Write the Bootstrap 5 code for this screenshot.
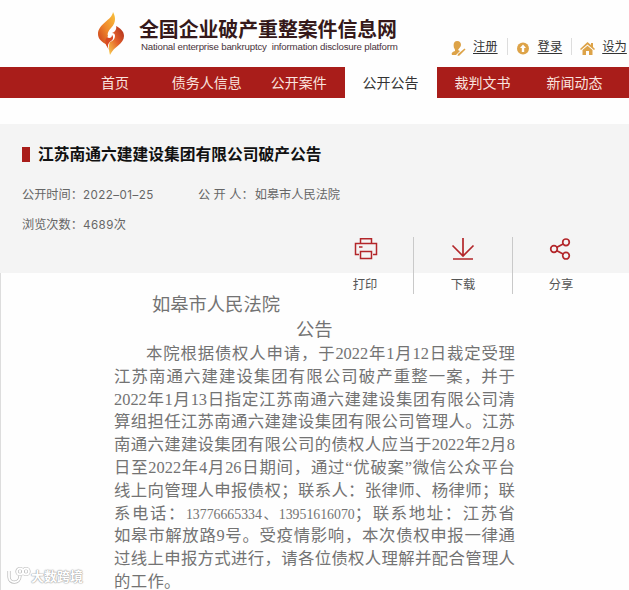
<!DOCTYPE html>
<html lang="zh-CN">
<head>
    <meta charset="UTF-8">
    <meta name="viewport" content="width=device-width, initial-scale=1.0">
    <title>全国企业破产重整案件信息网</title>
    <link href="https://cdn.jsdelivr.net/npm/bootstrap@5.3.0/dist/css/bootstrap.min.css" rel="stylesheet">
    <style>
        body {
            font-family: "Noto Sans CJK SC", sans-serif;
            width: 629px;
            height: 590px;
            overflow: hidden;
            background: #fefefe;
        }
        .site-header { height: 67px; padding-left: 96px; overflow: hidden; }
        .site-logo { width: 30px; height: 45px; margin-top: 11px; }
        .site-name { width: 260px; margin: 17px 0 0 13px; color: #35191a; }
        .site-name h1 { font-size: 19.9px; line-height: 24px; letter-spacing: -.05px; }
        .site-name p {
            font: 9.7px/12px "Liberation Sans", sans-serif;
            letter-spacing: -.19px;
            color: #49333b;
            padding-left: 2px;
            white-space: pre;
        }
        .user-links { margin: 36px 0 0 52px; font-size: 12.3px; line-height: 20px; }
        .user-links a { color: #333; text-underline-offset: 2px; }
        .user-links svg { width: 15px; height: 15px; margin: 5px 7px 0 0; }
        .user-links .split { border-left: 1px solid #ddd; height: 17px; margin: 2px 8px 0 9px; }

        .main-nav { height: 31px; background: #a91d1a; padding-left: 69px; }
        .main-nav .nav-link {
            width: 91.9px;
            height: 31px;
            line-height: 31px;
            font-size: 14px;
            color: #f9e3df;
        }
        .main-nav .nav-link.active { background: #fefefe; color: #333; }

        .notice-head { height: 149px; margin-top: 26px; padding: 18px 0 0 22px; background: #f4f4f4; }
        .notice-head h2 { font-size: 15.75px; line-height: 24px; color: #111; }
        .title-bar { width: 8px; height: 15px; margin-right: 8px; background: #a91d1a; }
        .meta { font-size: 12.2px; line-height: 20px; color: #666; font-family: Inter, "Noto Sans CJK SC", sans-serif; }
        .meta .cell { width: 176px; }
        .meta .num { font-size: 11.6px; letter-spacing: .45px; }
        .meta-first { margin-top: 19px; }
        .meta-second { margin-top: 10px; }

        .notice-main { height: 317px; border-left: 1px solid #ddd; }
        .tools { margin: -36px 0 0 316px; height: 57px; }
        .tools .tool { width: 96px; font-size: 12.3px; color: #555; line-height: 18px; }
        .tools .tool-mid { width: 100px; border: solid #c9c9c9; border-width: 0 1px; }
        .tools svg { width: 26px; height: 24px; margin-bottom: 14px; }

        .notice-body {
            width: 401px;
            margin: -1px 0 0 113px;
            font-family: "Liberation Serif", "Noto Sans CJK SC", serif;
            font-size: 16.4px;
            line-height: 22.8px;
            color: #737373;
        }
        .notice-body .court { font-size: 18.3px; padding-left: 38px; line-height: 24px; }
        .notice-body .heading { font-size: 18.3px; padding-left: 182px; line-height: 26px; }
        .line { white-space: nowrap; text-align: justify; text-align-last: justify; height: 22.8px; }
        .line.indent { padding-left: 32px; }
        .line.last { text-align-last: left; letter-spacing: .3px; }
        .phone { font-size: 13.8px; }

        .site-stamp { position: absolute; left: 7px; top: 566px; color: #fff; }
        .site-stamp svg { width: 24px; height: 20px; }
        .site-stamp span {
            font-size: 13px;
            line-height: 20px;
            font-weight: 700;
            text-shadow: 0 0 1px #999, 0 0 1px #aaa, 0 0 2px #bbb;
        }
    </style>
</head>
<body>
    <header class="site-header d-flex align-items-start text-nowrap">
        <svg class="site-logo flex-shrink-0" viewBox="0 0 30 45">
            <defs>
                <linearGradient id="flameTop" x1="1" y1="0" x2="0" y2="1">
                    <stop offset="0" stop-color="#f8c33c"/>
                    <stop offset=".5" stop-color="#f08a2c"/>
                    <stop offset="1" stop-color="#c93a1c"/>
                </linearGradient>
                <linearGradient id="flameBottom" x1="1" y1="0" x2="0" y2="1">
                    <stop offset="0" stop-color="#a82a1a"/>
                    <stop offset=".5" stop-color="#e4602a"/>
                    <stop offset="1" stop-color="#f9cf50"/>
                </linearGradient>
            </defs>
            <path d="M17 1C16 9 2 13 2 23c0 5 4 8 9 11-1-4-1-7 1-9-1-2 0-5 3-8 3-3 4-6 4-9 0-3-1-5-2-7z" fill="url(#flameTop)"/>
            <path d="M20 15c4 2 8 5 8 10 0 8-10 10-14 19-1-5-2-9 0-13 3-1 5-3 5-6 0-2-1-3-3-3 3-1 5-4 4-7z" fill="url(#flameBottom)"/>
            <path d="M10 34c-1-3-1-6 1-8 2 2 5 1 5-2 2 2 1 5-1 6-3 2-4 5-2 9z" fill="#d94a22"/>
        </svg>
        <div class="site-name flex-shrink-0">
            <h1 class="fw-bold m-0">全国企业破产重整案件信息网</h1>
            <p class="m-0">National enterprise bankruptcy  information disclosure platform</p>
        </div>
        <div class="user-links d-flex">
            <svg viewBox="0 0 15 15" fill="#dda348"><path d="M6 0c3 0 4 2 4 4S8 7 7 9l2 1-4 4H1c-1-2 0-3 3-4 0-1 0-2-1-3-1-4 0-7 3-7z"/><path d="M13.5 7.5l1 1-6 6-2 .5.5-2z"/></svg>
            <a href="#">注册</a>
            <span class="split"></span>
            <svg viewBox="0 0 15 15"><circle cx="7" cy="7.5" r="6" fill="#dda348"/><path d="M7 3.500l3 3.500H8.200v4H5.800V7H4z" fill="#fff"/></svg>
            <a href="#">登录</a>
            <span class="split"></span>
            <svg viewBox="0 0 15 15" fill="#dda348"><path d="M7.500 1L11 4V2h2v4l2 2-1 1-6.500-5.500L1 9 0 8z"/><path d="M2.500 9l5-4.300 5 4.300v5H9v-4H6v4H2.500z"/></svg>
            <a href="#">设为</a>
        </div>
    </header>

    <nav class="main-nav nav flex-nowrap text-center overflow-hidden">
        <a class="nav-link p-0 flex-shrink-0" href="#">首页</a>
        <a class="nav-link p-0 flex-shrink-0" href="#">债务人信息</a>
        <a class="nav-link p-0 flex-shrink-0" href="#">公开案件</a>
        <a class="nav-link p-0 flex-shrink-0 active" href="#">公开公告</a>
        <a class="nav-link p-0 flex-shrink-0" href="#">裁判文书</a>
        <a class="nav-link p-0 flex-shrink-0" href="#">新闻动态</a>
    </nav>

    <section class="notice-head">
        <div class="d-flex align-items-center">
            <span class="title-bar"></span>
            <h2 class="fw-bold m-0">江苏南通六建建设集团有限公司破产公告</h2>
        </div>
        <div class="meta meta-first d-flex">
            <div class="cell">公开时间&#xff1a;<span class="num">2022–01–25</span></div>
            <div>公 开 人&#xff1a;&#x200a;如皋市人民法院</div>
        </div>
        <div class="meta meta-second">浏览次数&#xff1a;<span class="num">4689</span>次</div>
    </section>

    <main class="notice-main d-flex flex-column">
        <!-- toolbar straddles the grey panel and the white body -->
        <div class="tools d-flex flex-shrink-0 text-center">
            <div class="tool">
                <svg viewBox="0 0 26 24" fill="none" stroke="#b3262a" stroke-width="1.5"><path d="M8.500 6V1.800h11V6M7 17.500H3.500V6.500h21v11H21M8.500 14.500h11v7h-11zM7 10h3.500"/></svg>
                <div>打印</div>
            </div>
            <div class="tool tool-mid">
                <svg viewBox="0 0 26 24" fill="none" stroke="#b3262a" stroke-width="1.7"><path d="M13 1v18M2.500 8.500L13 19 23.500 8.500M3 22h20"/></svg>
                <div>下载</div>
            </div>
            <div class="tool">
                <svg viewBox="0 0 26 24" fill="none" stroke="#b3262a" stroke-width="1.7"><circle cx="6" cy="12" r="3.300"/><circle cx="18" cy="5.300" r="3.300"/><circle cx="18" cy="18.700" r="3.300"/><path d="M8.900 10.300l6.200-3.400M8.900 13.700l6.200 3.400"/></svg>
                <div>分享</div>
            </div>
        </div>

        <article class="notice-body flex-shrink-0">
            <div class="court">如皋市人民法院</div>
            <div class="heading">公告</div>
            <div class="line indent">本院根据债权人申请&#xff0c;于2022年1月12日裁定受理</div>
            <div class="line">江苏南通六建建设集团有限公司破产重整一案&#xff0c;并于</div>
            <div class="line">2022年1月13日指定江苏南通六建建设集团有限公司清</div>
            <div class="line">算组担任江苏南通六建建设集团有限公司管理人。江苏</div>
            <div class="line">南通六建建设集团有限公司的债权人应当于2022年2月8</div>
            <div class="line">日至2022年4月26日期间&#xff0c;通过“优破案”微信公众平台</div>
            <div class="line">线上向管理人申报债权&#xff1b;联系人&#xff1a;张律师、杨律师&#xff1b;联</div>
            <div class="line">系电话&#xff1a;<span class="phone">13776665334、13951616070</span>&#xff1b;联系地址&#xff1a;江苏省</div>
            <div class="line">如皋市解放路9号。受疫情影响&#xff0c;本次债权申报一律通</div>
            <div class="line">过线上申报方式进行&#xff0c;请各位债权人理解并配合管理人</div>
            <div class="line last">的工作。</div>
        </article>
    </main>

    <div class="site-stamp d-flex">
        <svg viewBox="0 0 24 20" fill="none"><g stroke="#bbb" stroke-width="3.200"><path d="M2 5v6c0 7 11 7 11-1"/><circle cx="13" cy="5.500" r="3"/><circle cx="19" cy="5.500" r="3"/></g><g stroke="#fff" stroke-width="1.800"><path d="M2 5v6c0 7 11 7 11-1"/><circle cx="13" cy="5.500" r="3"/><circle cx="19" cy="5.500" r="3"/></g></svg>
        <span>大数跨境</span>
    </div>

    <script src="https://cdn.jsdelivr.net/npm/bootstrap@5.3.0/dist/js/bootstrap.bundle.min.js"></script>
</body>
</html>
